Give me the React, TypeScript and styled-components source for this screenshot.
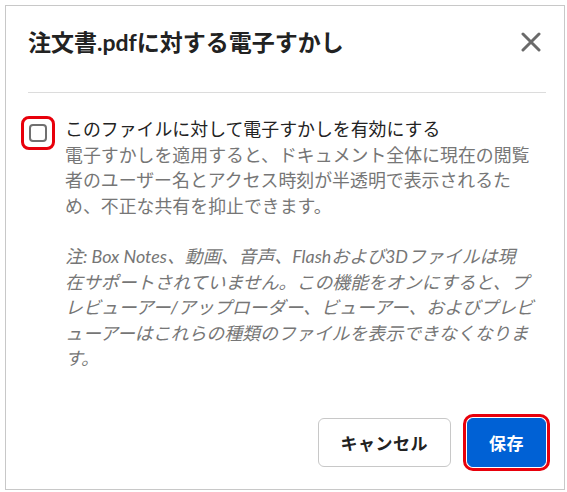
import React from "react";
import styled, { createGlobalStyle } from "styled-components";

const Global = createGlobalStyle`
  html, body { margin: 0; padding: 0; background: #fff; }
  body { font-family: Lato, "Noto Sans CJK JP", sans-serif; }
  * { box-sizing: border-box; }
`;

const Page = styled.div`
  padding: 5px;
`;

const Dialog = styled.div`
  width: 560px;
  height: 485px;
  border: 1px solid #c8c8c8;
  background: #fff;
  display: flex;
  flex-direction: column;
`;

const Header = styled.div`
  display: flex;
  align-items: center;
  justify-content: space-between;
  margin: 0 18px 0 22px;
  padding: 18px 0 32px;
  border-bottom: 1px solid #dcdcdc;
`;

const Title = styled.h1`
  margin: 0;
  font-size: 23px;
  line-height: 36px;
  font-weight: 700;
  color: #222;
`;

const CloseButton = styled.button`
  width: 24px;
  height: 24px;
  padding: 0;
  margin-right: 3px;
  border: none;
  background: none;
  display: flex;
  align-items: center;
  justify-content: center;
  cursor: pointer;
`;

const Body = styled.div`
  flex: 1;
  padding: 23px 10px 0 15px;
  display: flex;
  gap: 10px;
  align-items: flex-start;
`;

const FocusRing = styled.span`
  flex: none;
  width: 34px;
  height: 34px;
  border: 3px solid #e8000b;
  border-radius: 8px;
  display: flex;
  align-items: center;
  justify-content: center;
`;

const Box = styled.span`
  width: 18px;
  height: 18px;
  border: 2px solid #707070;
  border-radius: 4px;
  background: #fff;
`;

const TextCol = styled.div`
  flex: 1;
  padding-top: 1px;
  font-size: 17.9px;
  line-height: 25.5px;
  white-space: nowrap;
`;

const Label = styled.div`
  color: #222;
`;

const Description = styled.div`
  color: #767676;
`;

const Note = styled.div`
  color: #767676;
  font-style: italic;
  margin-top: 25px;
`;

const Footer = styled.div`
  display: flex;
  justify-content: flex-end;
  gap: 16px;
  padding: 0 18px 22px;
`;

const Button = styled.button<{ $primary?: boolean }>`
  height: 49px;
  padding: 0 ${(p) => (p.$primary ? 21 : 22)}px;
  border-radius: 6px;
  font-family: Lato, "Noto Sans CJK JP", sans-serif;
  font-size: 17px;
  font-weight: 700;
  letter-spacing: 0.5px;
  cursor: pointer;
  border: 1px solid ${(p) => (p.$primary ? "#0061d5" : "#c8c8c8")};
  background: ${(p) => (p.$primary ? "#0061d5" : "#fff")};
  color: ${(p) => (p.$primary ? "#fff" : "#222")};
  ${(p) => p.$primary && `outline: 3px solid #e8000b; outline-offset: 1px;`}
`;

export default function App() {
  return (
    <>
      <Global />
      <Page>
        <Dialog>
          <Header>
            <Title>注文書.pdfに対する電子すかし</Title>
            <CloseButton aria-label="閉じる">
              <svg width="20" height="20" viewBox="0 0 20 20">
                <path
                  d="M2 2 L18 18 M18 2 L2 18"
                  stroke="#6a6a6a"
                  strokeWidth="3"
                  strokeLinecap="round"
                />
              </svg>
            </CloseButton>
          </Header>
          <Body>
            <FocusRing>
              <Box />
            </FocusRing>
            <TextCol>
              <Label>このファイルに対して電子すかしを有効にする</Label>
              <Description>
                電子すかしを適用すると、ドキュメント全体に現在の閲覧
                <br />
                者のユーザー名とアクセス時刻が半透明で表示されるた
                <br />
                め、不正な共有を抑止できます。
              </Description>
              <Note>
                注: Box Notes、動画、音声、Flashおよび3Dファイルは現
                <br />
                在サポートされていません。この機能をオンにすると、プ
                <br />
                レビューアー/アップローダー、ビューアー、およびプレビ
                <br />
                ューアーはこれらの種類のファイルを表示できなくなりま
                <br />
                す。
              </Note>
            </TextCol>
          </Body>
          <Footer>
            <Button>キャンセル</Button>
            <Button $primary>保存</Button>
          </Footer>
        </Dialog>
      </Page>
    </>
  );
}
